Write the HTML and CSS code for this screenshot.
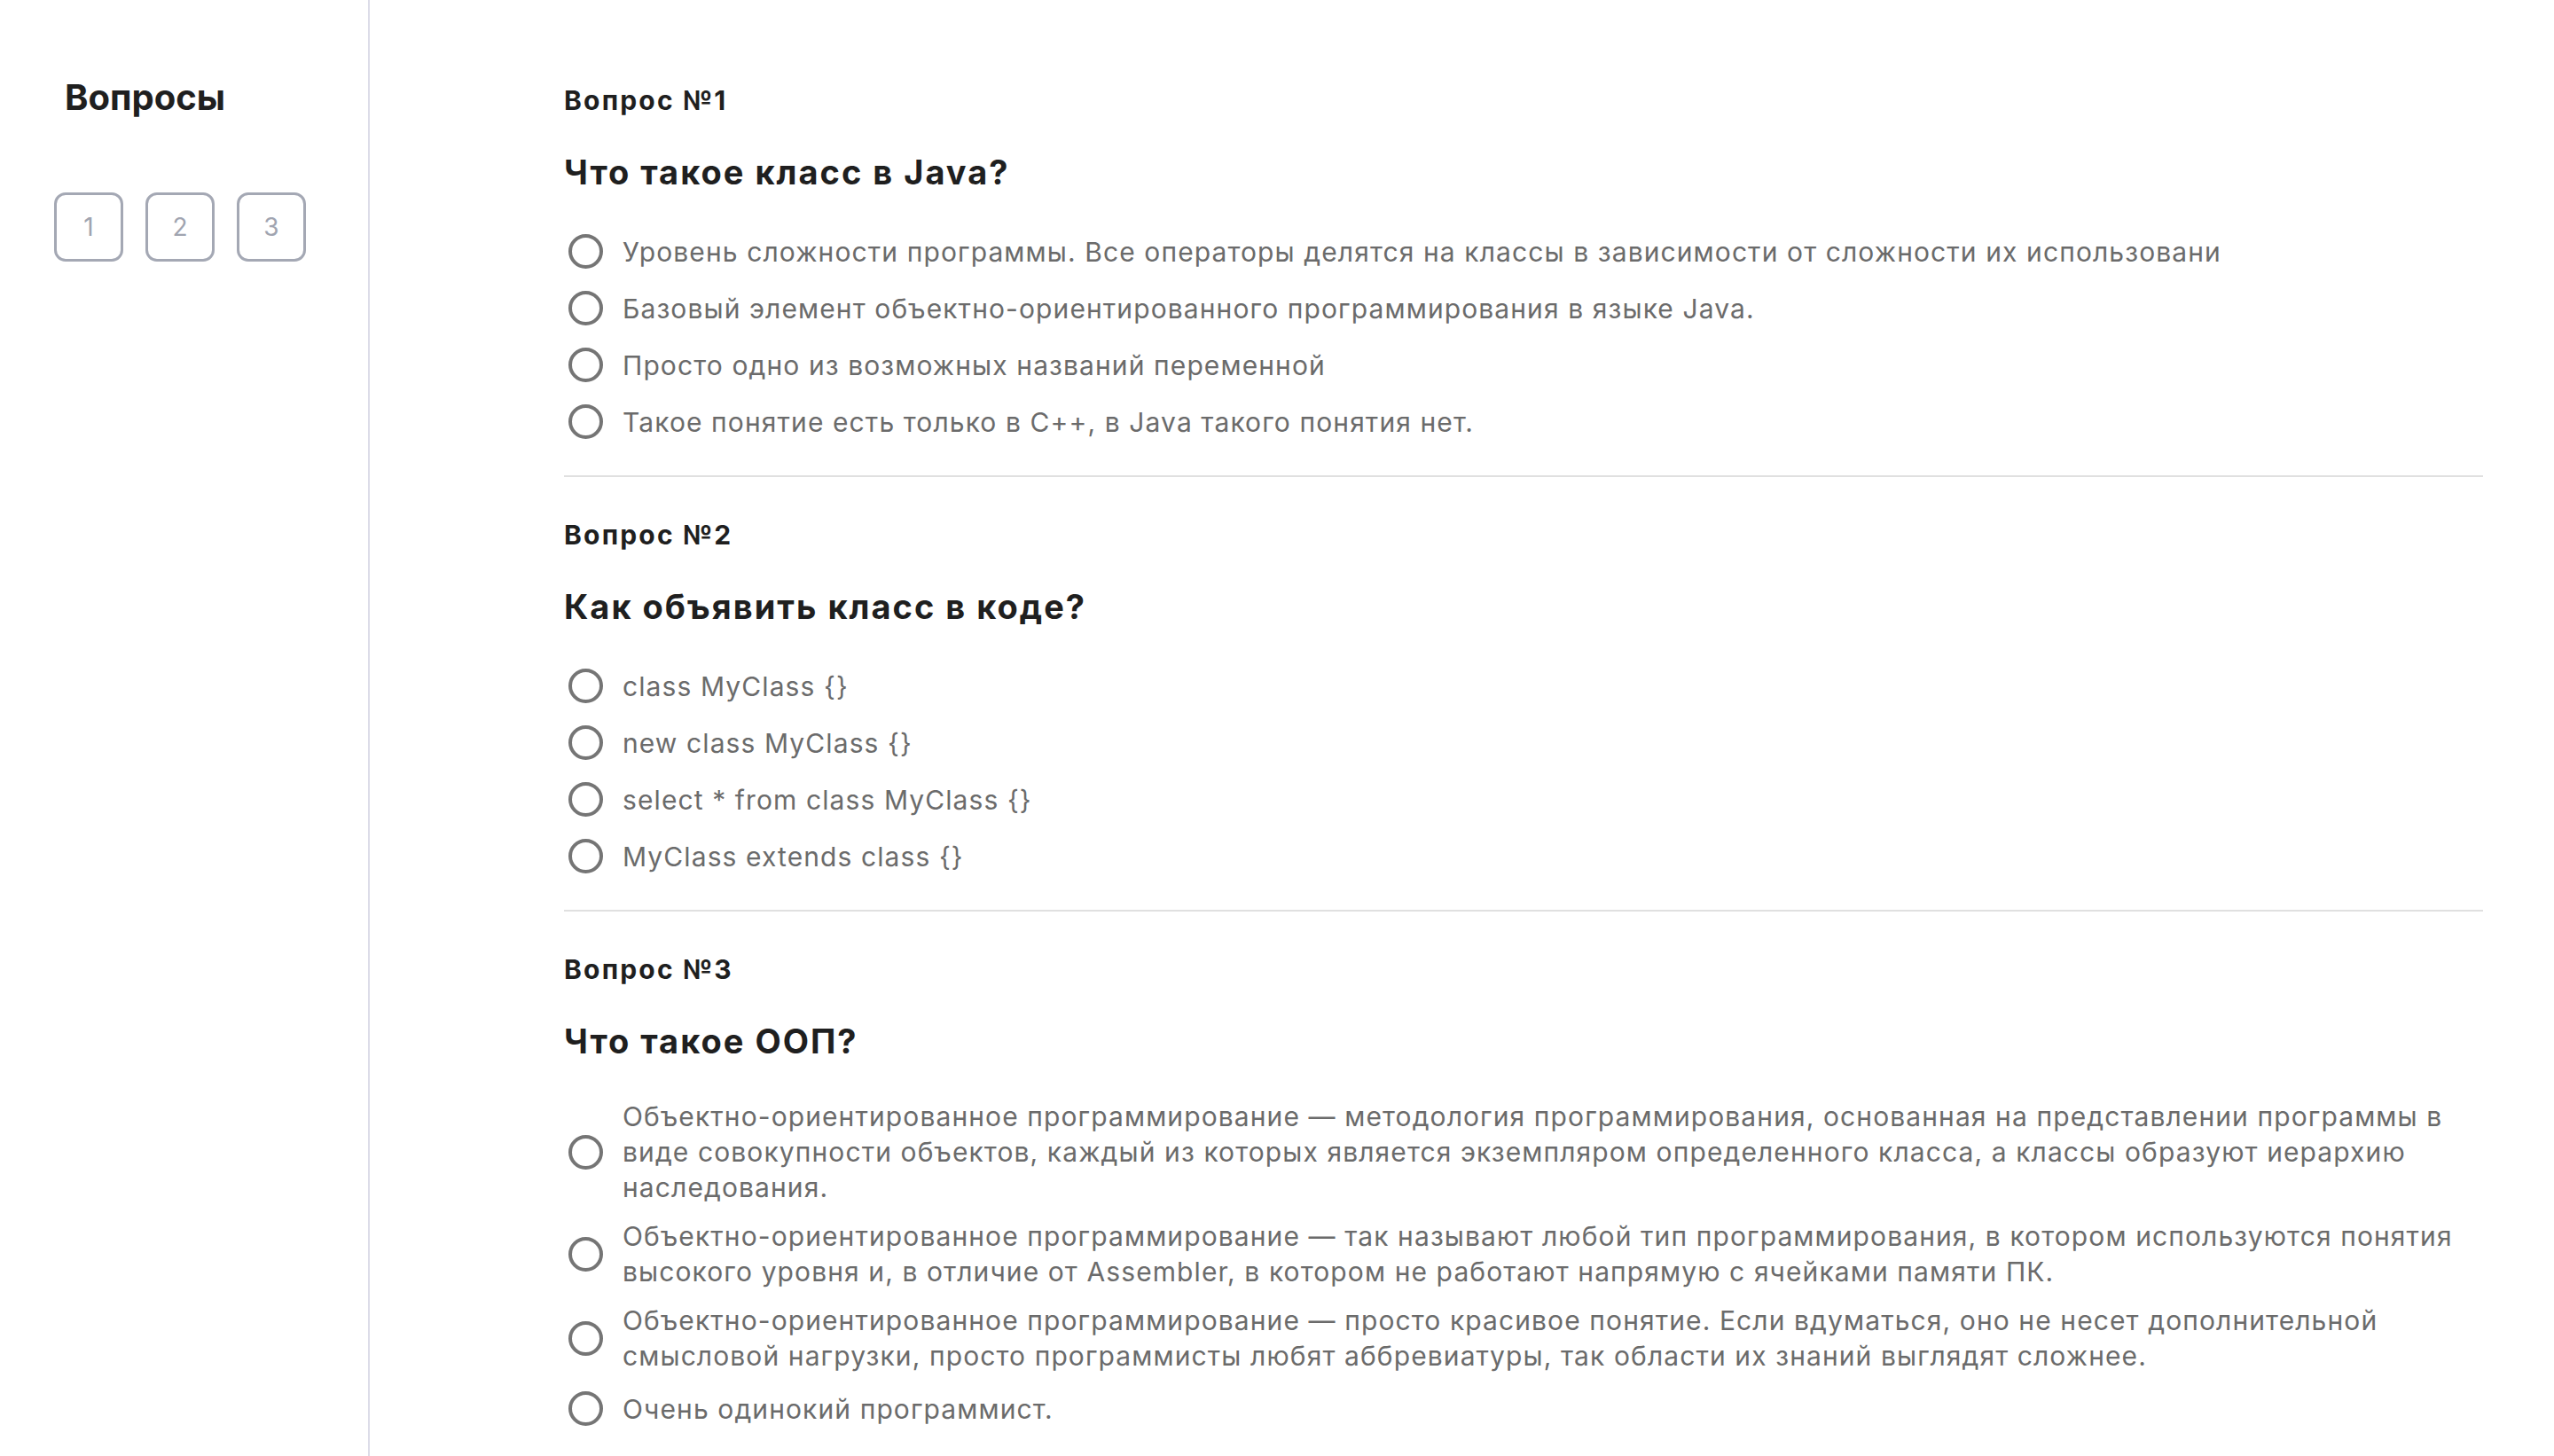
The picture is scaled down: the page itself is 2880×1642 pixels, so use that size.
FILE: index.html
```html
<!DOCTYPE html>
<html lang="ru">
<head>
<meta charset="utf-8">
<title>Вопросы</title>
<link rel="stylesheet" href="styles.css">
</head>
<body>
<div class="layout">
  <aside class="sidebar">
    <h2 class="sidebar-title">Вопросы</h2>
    <nav class="qnav">
      <a class="qnav-item" href="#q1">1</a>
      <a class="qnav-item" href="#q2">2</a>
      <a class="qnav-item" href="#q3">3</a>
    </nav>
  </aside>
  <main class="main">
    <section class="question" id="q1">
      <div class="q-label">Вопрос №1</div>
      <h3 class="q-title">Что такое класс в Java?</h3>
      <div class="options">
        <label class="option"><input class="radio" type="radio" name="q1"><span class="option-text">Уровень сложности программы. Все операторы делятся на классы в зависимости от сложности их использовани</span></label>
        <label class="option"><input class="radio" type="radio" name="q1"><span class="option-text">Базовый элемент объектно-ориентированного программирования в языке Java.</span></label>
        <label class="option"><input class="radio" type="radio" name="q1"><span class="option-text">Просто одно из возможных названий переменной</span></label>
        <label class="option"><input class="radio" type="radio" name="q1"><span class="option-text">Такое понятие есть только в C++, в Java такого понятия нет.</span></label>
      </div>
    </section>
    <section class="question" id="q2">
      <div class="q-label">Вопрос №2</div>
      <h3 class="q-title">Как объявить класс в коде?</h3>
      <div class="options">
        <label class="option"><input class="radio" type="radio" name="q2"><span class="option-text">class MyClass {}</span></label>
        <label class="option"><input class="radio" type="radio" name="q2"><span class="option-text">new class MyClass {}</span></label>
        <label class="option"><input class="radio" type="radio" name="q2"><span class="option-text">select * from class MyClass {}</span></label>
        <label class="option"><input class="radio" type="radio" name="q2"><span class="option-text">MyClass extends class {}</span></label>
      </div>
    </section>
    <section class="question" id="q3">
      <div class="q-label">Вопрос №3</div>
      <h3 class="q-title">Что такое ООП?</h3>
      <div class="options">
        <label class="option"><input class="radio" type="radio" name="q3"><span class="option-text">Объектно-ориентированное программирование — методология программирования, основанная на представлении программы в виде совокупности объектов, каждый из которых является экземпляром определенного класса, а классы образуют иерархию наследования.</span></label>
        <label class="option"><input class="radio" type="radio" name="q3"><span class="option-text">Объектно-ориентированное программирование — так называют любой тип программирования, в котором используются понятия высокого уровня и, в отличие от Assembler, в котором не работают напрямую с ячейками памяти ПК.</span></label>
        <label class="option"><input class="radio" type="radio" name="q3"><span class="option-text">Объектно-ориентированное программирование — просто красивое понятие. Если вдуматься, оно не несет дополнительной смысловой нагрузки, просто программисты любят аббревиатуры, так области их знаний выглядят сложнее.</span></label>
        <label class="option"><input class="radio" type="radio" name="q3"><span class="option-text">Очень одинокий программист.</span></label>
      </div>
    </section>
  </main>
</div>
</body>
</html>
```

FILE: styles.css
```css
* {
  box-sizing: border-box;
}

html, body {
  margin: 0;
  padding: 0;
  background: #ffffff;
}

body {
  font-family: Inter, "Noto Sans", "Liberation Sans", sans-serif;
  color: #1f1f1f;
}

.layout {
  display: flex;
  min-height: 100vh;
}

.sidebar {
  flex: 0 0 417px;
  border-right: 2px solid #dcdce8;
  padding: 86px 0 0 61px;
}

.sidebar-title {
  margin: 0 0 0 12px;
  font-size: 40px;
  line-height: 48px;
  font-weight: 700;
  color: #1f1f1f;
}

.qnav {
  display: flex;
  gap: 25px;
  margin-top: 83px;
}

.qnav-item {
  width: 78px;
  height: 78px;
  border: 3px solid #a4a8b4;
  border-radius: 13px;
  display: flex;
  align-items: center;
  justify-content: center;
  font-size: 28px;
  color: #a0a4b0;
  text-decoration: none;
}

.main {
  flex: 1;
  padding: 95px 80px 0 219px;
}

.question {
  padding-bottom: 36px;
  border-bottom: 2px solid #e0e0e0;
  margin-bottom: 47px;
}

.q-label {
  font-size: 30px;
  line-height: 36px;
  font-weight: 700;
  letter-spacing: 2.2px;
  color: #1f1f1f;
}

.q-title {
  margin: 40px 0 42px;
  font-size: 38px;
  line-height: 46px;
  font-weight: 700;
  letter-spacing: 2px;
  color: #1f1f1f;
}

.options {
  display: flex;
  flex-direction: column;
  gap: 15px;
}

.option {
  display: flex;
  align-items: center;
  gap: 17px;
  cursor: pointer;
}

.radio {
  appearance: none;
  -webkit-appearance: none;
  flex: 0 0 39px;
  width: 39px;
  height: 39px;
  margin: 5px;
  border: 4px solid #757575;
  border-radius: 50%;
  background: #fff;
}

.option-text {
  font-size: 30px;
  line-height: 40px;
  letter-spacing: 1.1px;
  color: #6b6b6b;
}
```
